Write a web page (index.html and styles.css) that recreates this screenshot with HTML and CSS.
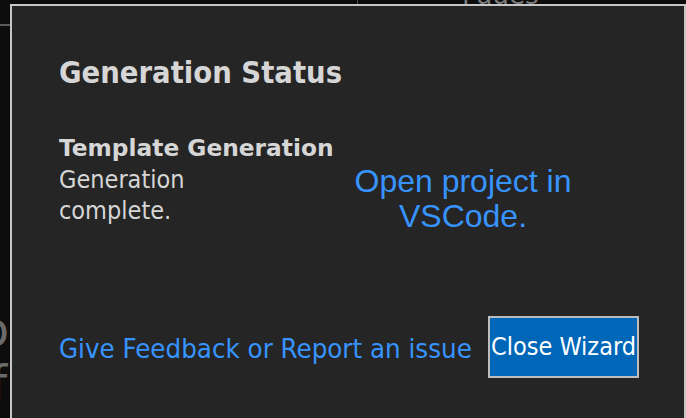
FILE: index.html
```html
<!DOCTYPE html>
<html lang="en">
<head>
<meta charset="utf-8">
<title>Generation Status</title>
<link rel="stylesheet" href="styles.css">
</head>
<body>
<div class="backdrop">
  <div class="bg-header">
    <span class="bg-divider"></span>
    <span class="bg-tab">Pages</span>
  </div>
  <div class="bg-body">
    <div class="bg-clip">
      <div class="bg-text">
        <div class="bg-line">to</div>
        <div class="bg-line">of</div>
      </div>
    </div>
  </div>
</div>

<div class="dialog" role="dialog" aria-labelledby="dlg-title">
  <h1 class="title" id="dlg-title">Generation Status</h1>
  <div class="status">
    <div class="step">
      <div class="step-name">Template Generation</div>
      <div class="step-msg">Generation complete.</div>
    </div>
    <div class="open">
      <a class="open-link" href="#">Open project in VSCode.</a>
    </div>
  </div>
  <div class="footer">
    <a class="feedback" href="#">Give Feedback or Report an issue</a>
    <button class="close" type="button">Close Wizard</button>
  </div>
</div>
</body>
</html>
```

FILE: styles.css
```css
html, body {
  margin: 0;
  padding: 0;
}

body {
  width: 686px;
  height: 418px;
  overflow: hidden;
  background: #0c0c0c;
  font-family: "DejaVu Sans Condensed", "DejaVu Sans", sans-serif;
}

/* page behind the modal */
.backdrop {
  display: flex;
  flex-direction: column;
  height: 418px;
}

.bg-header {
  display: flex;
  align-items: flex-end;
  height: 24px;
  border-bottom: 2px solid #5a5a5a;
  width: 12px;
  overflow: visible;
}

.bg-divider {
  display: block;
  flex: none;
  margin-left: 357px;
  width: 1px;
  height: 24px;
  background: #4a4a4a;
}

.bg-tab {
  flex: none;
  margin-left: 104px;
  margin-bottom: 14px;
  font-family: "DejaVu Sans", sans-serif;
  font-size: 26px;
  line-height: 30px;
  color: #7a7a7a;
}

.bg-body {
  flex: 1;
  padding-top: 276px;
}

.bg-clip {
  width: 9px;
  overflow: hidden;
  display: flex;
  justify-content: flex-end;
}

.bg-text {
  flex: none;
  font-family: "DejaVu Sans", sans-serif;
  font-size: 48px;
  line-height: 54px;
  color: #6a6a6a;
}

/* modal dialog */
.dialog {
  position: absolute;
  left: 10px;
  top: 4px;
  width: 676px;
  height: 440px;
  box-sizing: border-box;
  border: 2px solid #c6c6c6;
  border-bottom: none;
  background: #252525;
  padding: 49px 45px 0 47px;
  color: #d6d6d6;
}

.title {
  margin: 0;
  font-weight: bold;
  font-size: 30.6px;
  line-height: 36px;
}

.status {
  display: flex;
  margin-top: 43px;
}

.step {
  flex: none;
  width: 228px;
}

.step-name {
  font-weight: bold;
  font-family: "DejaVu Sans", sans-serif;
  font-size: 23.3px;
  line-height: 28px;
  white-space: nowrap;
}

.step-msg {
  margin-top: 2px;
  font-size: 25px;
  line-height: 31px;
}

.open {
  flex: 1;
  padding: 30px 40px 0;
  text-align: center;
}

.open-link {
  font-family: "Liberation Sans", Arial, sans-serif;
  font-size: 32px;
  line-height: 35px;
  color: #3794ff;
  text-decoration: none;
}

.footer {
  display: flex;
  align-items: center;
  justify-content: space-between;
  margin-top: 82px;
}

.feedback {
  padding-top: 3px;
  font-size: 27.4px;
  line-height: 32px;
  color: #3794ff;
  text-decoration: none;
}

.close {
  flex: none;
  width: 151px;
  height: 62px;
  box-sizing: border-box;
  padding: 0;
  border: 2px solid #bdbdbd;
  background: #0066b8;
  color: #ffffff;
  font-family: "DejaVu Sans Condensed", "DejaVu Sans", sans-serif;
  font-size: 25px;
  line-height: 30px;
}
```
